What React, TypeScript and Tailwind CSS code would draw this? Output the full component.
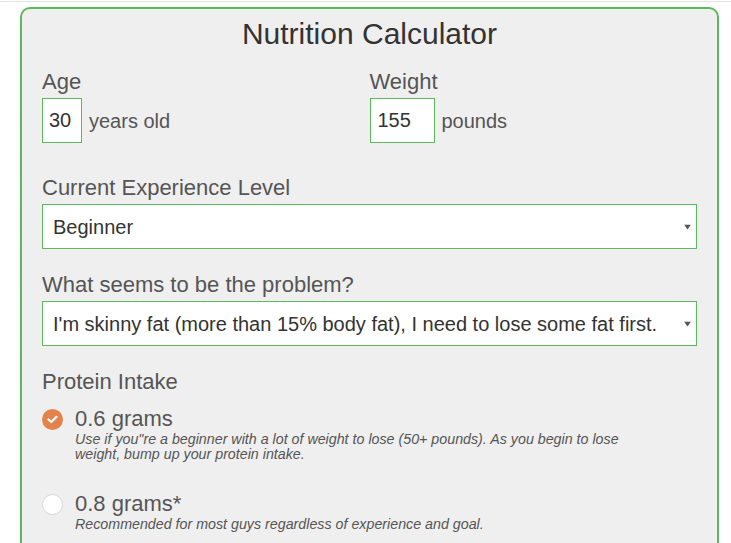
import { useState } from "react";

const font = { fontFamily: '"Liberation Sans", Arial, sans-serif' };

function Caret() {
  return (
    <svg width="7" height="5" viewBox="0 0 7 5" className="absolute right-[6px] top-1/2 -translate-y-1/2 pointer-events-none">
      <path d="M0 0 L7 0 L3.5 5 Z" fill="#555" />
    </svg>
  );
}

function Select({ value, options }: { value: string; options: string[] }) {
  return (
    <div className="relative mt-1">
      <select
        defaultValue={value}
        className="appearance-none w-full h-[45px] bg-white border border-[#5cb85c] pl-[10px] pr-6 text-[20px] text-[#333] outline-none"
      >
        {options.map((o) => (
          <option key={o}>{o}</option>
        ))}
      </select>
      <Caret />
    </div>
  );
}

function Radio({ checked }: { checked: boolean }) {
  if (checked) {
    return (
      <span className="flex items-center justify-center w-[21px] h-[21px] rounded-full bg-[#e2834b] shrink-0 mt-[2px]">
        <svg width="11" height="9" viewBox="0 0 11 9">
          <path d="M1.5 4.5 L4.3 7 L9.5 1.8" fill="none" stroke="#fff" strokeWidth="2.2" strokeLinecap="round" strokeLinejoin="round" />
        </svg>
      </span>
    );
  }
  return <span className="block w-[21px] h-[21px] rounded-full bg-white border border-[#d6d6d6] shrink-0 mt-[2px]" />;
}

const protein = [
  {
    id: "0.6",
    title: "0.6 grams",
    note: "Use if you\"re a beginner with a lot of weight to lose (50+ pounds). As you begin to lose weight, bump up your protein intake.",
  },
  {
    id: "0.8",
    title: "0.8 grams*",
    note: "Recommended for most guys regardless of experience and goal.",
  },
];

export default function App() {
  const [picked, setPicked] = useState("0.6");

  return (
    <div className="min-h-screen bg-white pt-[1px]" style={font}>
      <div className="h-px bg-[#e3e3e3]" />
      <div className="mx-[20px] mt-[5px] w-[699px] h-[600px] bg-[#efefef] border-2 border-[#5cb85c] rounded-[10px] px-[20px] pt-[7px]">
        <h1 className="text-center text-[30px] leading-[36px] text-[#333]">Nutrition Calculator</h1>

        {/* Age / Weight */}
        <div className="grid grid-cols-2 mt-[18px]">
          <div>
            <label className="block text-[22px] leading-[24px] text-[#555]">Age</label>
            <div className="flex items-center gap-[7px] mt-1">
              <input
                defaultValue="30"
                className="w-[40px] h-[45px] bg-white border border-[#5cb85c] px-[6px] text-[20px] text-[#333] outline-none"
              />
              <span className="text-[20px] text-[#555]">years old</span>
            </div>
          </div>
          <div>
            <label className="block text-[22px] leading-[24px] text-[#555]">Weight</label>
            <div className="flex items-center gap-[7px] mt-1">
              <input
                defaultValue="155"
                className="w-[65px] h-[45px] bg-white border border-[#5cb85c] px-[7px] text-[20px] text-[#333] outline-none"
              />
              <span className="text-[20px] text-[#555]">pounds</span>
            </div>
          </div>
        </div>

        <div className="mt-[33px]">
          <label className="block text-[22px] leading-[24px] text-[#555]">Current Experience Level</label>
          <Select value="Beginner" options={["Beginner", "Intermediate", "Advanced"]} />
        </div>

        <div className="mt-[24px]">
          <label className="block text-[22px] leading-[24px] text-[#555]">What seems to be the problem?</label>
          <Select
            value="I'm skinny fat (more than 15% body fat), I need to lose some fat first."
            options={[
              "I'm skinny fat (more than 15% body fat), I need to lose some fat first.",
              "I'm skinny, I need to build muscle.",
            ]}
          />
        </div>

        <div className="mt-[24px]">
          <label className="block text-[22px] leading-[24px] text-[#555]">Protein Intake</label>
          <div className="flex flex-col gap-[30px] mt-[13px]">
            {protein.map((p) => (
              <div key={p.id} className="flex items-start gap-[12px] cursor-pointer" onClick={() => setPicked(p.id)}>
                <Radio checked={picked === p.id} />
                <div>
                  <div className="text-[22px] leading-[24px] text-[#555]">{p.title}</div>
                  <p className="max-w-[555px] mt-[1px] text-[14.25px] leading-[15px] italic text-[#555]">{p.note}</p>
                </div>
              </div>
            ))}
          </div>
        </div>
      </div>
    </div>
  );
}
